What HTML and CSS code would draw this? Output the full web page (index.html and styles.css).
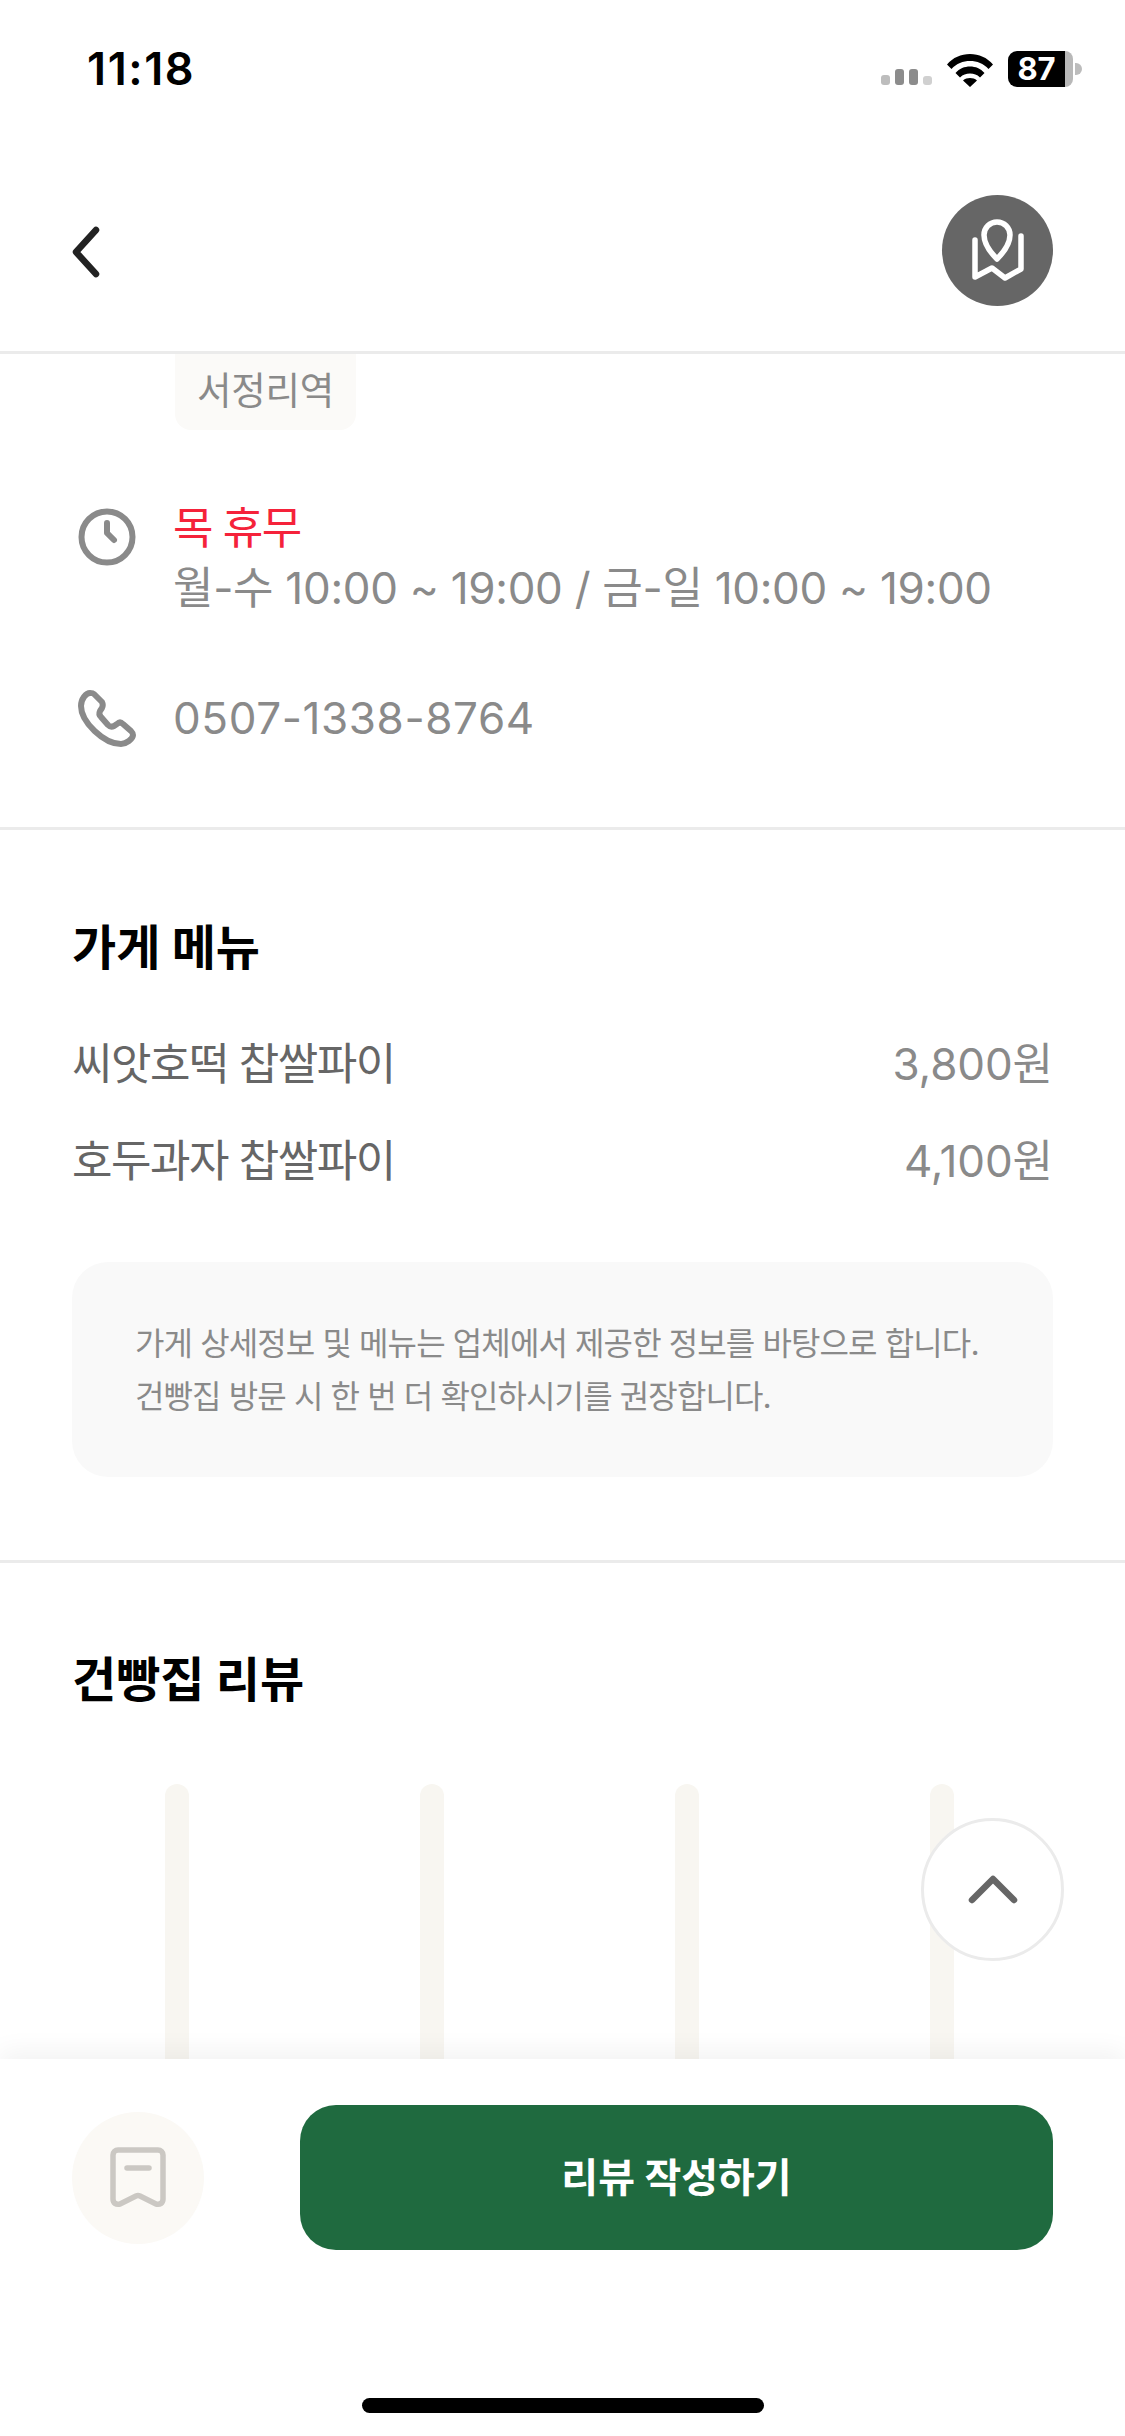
FILE: index.html
```html
<!DOCTYPE html>
<html lang="ko">
<head>
<meta charset="utf-8">
<title>가게 정보</title>
<link rel="stylesheet" href="styles.css">
</head>
<body>
<div class="screen">
  <div class="status">
    <span class="time">11:18</span>
    <div class="status-icons">
      <div class="signal"><i class="s1"></i><i class="s2"></i><i class="s3"></i><i class="s4"></i></div>
      <svg class="wifi" viewBox="0 0 46 34"><path d="M0 11.500C6 4.500 14 1 23 1s17 3.500 23 10.500l-4.500 4.500C36.500 10.500 30 8 23 8S9.500 10.500 4.500 16zM8.500 20C12.500 15.500 17.500 13.500 23 13.500S33.500 15.500 37.500 20L33 24.500C30 21.500 27 20.500 23 20.500S16 21.500 13 24.500zM16 27.500c2-1.800 4.500-2.500 7-2.500s5 .7 7 2.500L23 34z"/></svg>
      <div class="battery"><div class="batt-body"><span class="batt-fill">87</span><span class="batt-rest"></span></div><span class="batt-nub"></span></div>
    </div>
  </div>
  <header class="topbar">
    <svg class="back" viewBox="0 0 30 52"><path d="M24 4 4 26l20 22"/></svg>
    <div class="mapbtn">
      <svg viewBox="0 0 60 66"><path d="M29 41C22 34 16 25 16 17a13 13 0 0 1 26 0c0 8-6 17-13 24Z"/><path d="M7 22V59L24 50 37 60 53 51V18"/></svg>
    </div>
  </header>
  <main class="content">
    <div class="info">
      <div class="chip">서정리역</div>
      <div class="row hours">
        <svg class="ico" viewBox="0 0 58 58"><circle cx="29" cy="29" r="25.500"/><path d="M29 15V25L36 32"/></svg>
        <div class="row-text">
          <div class="closed">목 휴무</div>
          <div>월-수 10:00 ~ 19:00 / 금-일 10:00 ~ 19:00</div>
        </div>
      </div>
      <div class="row phone">
        <svg class="ico" viewBox="0 0 58 58"><path d="M12 4C8 4 3 10 3 17 3 33 26 55 43 55 48 55 55 50 55 46 55 44 54 43 53 42L45 35C43 33 41 33 39 35L36 37C34 38 32 38 30 36L23 28C21 26 21 24 22 22L24 19C25 17 25 15 24 13L16 5C15 4 13 4 12 4Z"/></svg>
        <div class="row-text">0507-1338-8764</div>
      </div>
    </div>
    <section class="menu">
      <h2>가게 메뉴</h2>
      <div class="menu-list">
        <div class="menu-item"><span class="name">씨앗호떡 찹쌀파이</span><span class="price">3,800원</span></div>
        <div class="menu-item"><span class="name">호두과자 찹쌀파이</span><span class="price">4,100원</span></div>
      </div>
      <div class="note">
        <p>가게 상세정보 및 메뉴는 업체에서 제공한 정보를 바탕으로 합니다.</p>
        <p>건빵집 방문 시 한 번 더 확인하시기를 권장합니다.</p>
      </div>
    </section>
    <section class="reviews">
      <h2>건빵집 리뷰</h2>
      <div class="stripes"><i></i><i></i><i></i><i></i></div>
    </section>
  </main>
  <button class="totop" type="button"><svg viewBox="0 0 56 34"><path d="M7 27 28 6l21 21"/></svg></button>
  <footer class="bottom">
    <div class="actions">
      <div class="bookmark">
        <svg viewBox="0 0 56 62"><path d="M8 3H48a5 5 0 0 1 5 5V52c0 4-3 6-7 5L30 49c-1-.5-3-.5-4 0L10 57c-4 1-7-1-7-5V8a5 5 0 0 1 5-5Z"/><path d="M17 21H39"/></svg>
      </div>
      <button class="write" type="button">리뷰 작성하기</button>
    </div>
    <div class="homebar"></div>
  </footer>
</div>
</body>
</html>
```
FILE: styles.css
```css
* { box-sizing: border-box; }
html, body { margin: 0; padding: 0; background: #fff; }
body { font-family: Inter, "Noto Sans CJK KR", sans-serif; }
.screen { position: relative; width: 1125px; height: 2436px; display: flex; flex-direction: column; overflow: hidden; background: #fff; }

.status { height: 132px; flex: none; display: flex; justify-content: space-between; align-items: flex-start; padding: 44px 43px 0 87px; }
.time { font-size: 45px; line-height: 50px; font-weight: 600; color: #000; letter-spacing: 1.6px; }
.status-icons { display: flex; align-items: flex-end; height: 36px; margin-top: 7px; }
.signal { display: flex; align-items: flex-end; gap: 5px; margin-right: 15px; margin-bottom: 2px; }
.signal i { display: block; width: 9px; border-radius: 3px; }
.signal .s1 { height: 10px; background: #bdbdbd; }
.signal .s2 { height: 16px; background: #8c8c8c; }
.signal .s3 { height: 16px; background: #8c8c8c; }
.signal .s4 { height: 9px; background: #d0d0d0; }
.wifi { width: 46px; height: 34px; margin-right: 15px; fill: #000; }
.battery { display: flex; align-items: center; }
.batt-body { display: flex; width: 65px; height: 36px; }
.batt-fill { width: 57px; background: #000; color: #fff; font-size: 31px; line-height: 36px; font-weight: 700; text-align: center; border-radius: 9px 0 0 9px; }
.batt-rest { width: 8px; background: #b8b8b8; border-radius: 0 9px 9px 0; }
.batt-nub { width: 7px; height: 12px; margin-left: 2px; background: #bcbcbc; border-radius: 0 6px 6px 0; }

.topbar { height: 222px; flex: none; display: flex; justify-content: space-between; align-items: flex-start; padding: 63px 72px 0 72px; border-bottom: 3px solid #ebebeb; }
.back { width: 30px; height: 52px; margin-top: 31px; fill: none; stroke: #222; stroke-width: 6.500; stroke-linecap: round; stroke-linejoin: round; }
.mapbtn { width: 111px; height: 111px; border-radius: 50%; background: #666; display: flex; align-items: center; justify-content: center; }
.mapbtn svg { width: 60px; height: 66px; fill: none; stroke: #fff; stroke-width: 5.500; stroke-linecap: round; stroke-linejoin: round; }

.content { flex: 1; min-height: 0; display: flex; flex-direction: column; overflow: hidden; }
.info { padding: 0 72px 0; border-bottom: 3px solid #ebebeb; height: 476px; flex: none; }
.chip { width: 181px; height: 96px; margin: -20px 0 0 103px; padding-top: 20px; border-radius: 16px; background: #fbfaf8; color: #8a8a8a; font-size: 37.500px; line-height: 74px; text-align: center; letter-spacing: -0.2px; }
.row { display: flex; align-items: flex-start; gap: 37px; font-size: 44px; line-height: 60px; color: #8a8a8a; margin-left: 6px; }
.ico { width: 58px; height: 58px; flex: none; fill: none; stroke: #8a8a8a; stroke-width: 6; stroke-linecap: round; stroke-linejoin: round; }
.hours { margin-top: 74px; }
.hours .ico { margin-top: 4px; }
.hours .row-text { margin-top: -6px; letter-spacing: -0.3px; }
.closed { color: #f5223a; letter-spacing: -1.500px; }
.phone { margin-top: 70px; align-items: center; }
.phone .row-text { letter-spacing: 0.6px; }

h2 { margin: 0; font-size: 48px; line-height: 60px; font-weight: 700; color: #000; }
.menu { padding: 88px 72px 0; height: 733px; flex: none; border-bottom: 3px solid #ebebeb; }
.menu-list { display: flex; flex-direction: column; gap: 37px; margin-top: 56px; }
.menu-item { display: flex; justify-content: space-between; font-size: 44px; line-height: 60px; color: #666; }
.name { letter-spacing: -1.500px; }
.price { color: #8a8a8a; letter-spacing: -0.1px; }
.note { margin-top: 71px; height: 215px; padding: 55px 63px 0; border-radius: 36px; background: #f9f9f9; font-size: 32px; line-height: 53px; color: #8a8a8a; letter-spacing: -0.9px; }
.note p { margin: 0; }

.reviews { flex: 1; min-height: 0; padding: 87px 72px 0; display: flex; flex-direction: column; }
.stripes { flex: 1; display: flex; gap: 231px; margin-top: 74px; padding-left: 93px; }
.stripes i { display: block; width: 24px; border-radius: 12px 12px 0 0; background: #f8f6f1; }

.totop { position: absolute; left: 921px; top: 1818px; width: 143px; height: 143px; padding: 0; border: 3px solid #ebebeb; border-radius: 50%; background: #fff; display: flex; align-items: center; justify-content: center; }
.totop svg { width: 56px; height: 34px; fill: none; stroke: #666; stroke-width: 6.500; stroke-linecap: round; stroke-linejoin: round; }

.bottom { height: 377px; flex: none; position: relative; background: #fff; box-shadow: 0 -8px 24px rgba(0,0,0,.05); display: flex; flex-direction: column; }
.actions { display: flex; align-items: center; justify-content: space-between; padding: 46px 72px 0; }
.bookmark { width: 132px; height: 132px; border-radius: 50%; background: #fbf9f5; display: flex; align-items: center; justify-content: center; }
.bookmark svg { width: 56px; height: 62px; fill: none; stroke: #cbc8c3; stroke-width: 5.500; stroke-linecap: round; stroke-linejoin: round; }
.write { width: 753px; height: 145px; border: 0; border-radius: 36px; background: #1f6a3f; color: #fff; font-family: inherit; font-size: 40px; line-height: 145px; padding: 0 0 4px; font-weight: 700; }
.homebar { width: 402px; height: 15px; border-radius: 8px; background: #000; margin: 148px auto 0; }
```
